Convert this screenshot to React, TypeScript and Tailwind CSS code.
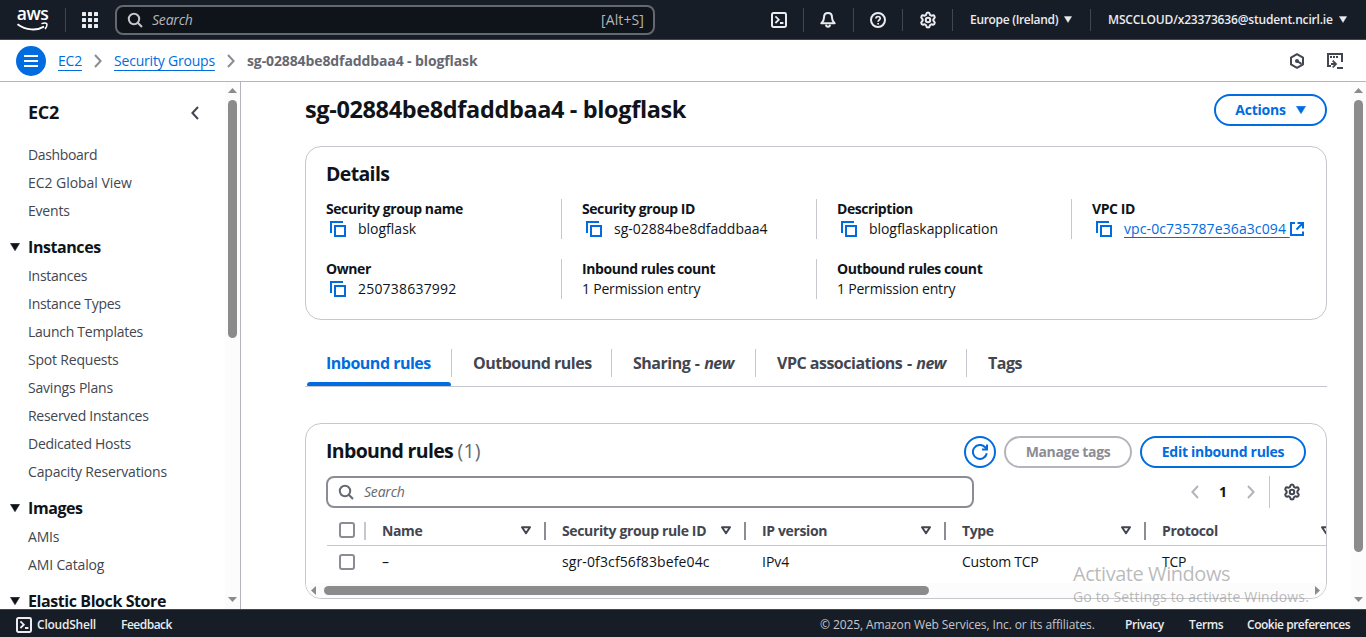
import type { ReactNode } from "react";
import { Settings } from "lucide-react";

const cx = (...c: (string | undefined | false)[]) => c.filter(Boolean).join(" ");

function Caret({ className }: { className?: string }) {
  return (
    <svg viewBox="0 0 10 8" className={cx("shrink-0", className)} fill="currentColor">
      <path d="M0.4 0.3h9.2L5 7.8z" stroke="currentColor" strokeWidth="0.5" strokeLinejoin="round" />
    </svg>
  );
}

function Chevron({ left, className }: { left?: boolean; className?: string }) {
  return (
    <svg viewBox="0 0 8 14" className={cx("h-[14px] w-2 shrink-0", className)} fill="none" stroke="currentColor" strokeWidth="2">
      <path d={left ? "M7 1L1.4 7L7 13" : "M1 1l5.6 6L1 13"} />
    </svg>
  );
}

function SearchIcon({ className }: { className?: string }) {
  return (
    <svg viewBox="0 0 16 16" className={cx("size-4 shrink-0", className)} fill="none" stroke="currentColor" strokeWidth="2">
      <circle cx="7" cy="7" r="5.2" />
      <path d="M10.8 10.8L15 15" />
    </svg>
  );
}

function ShellIcon() {
  return (
    <svg viewBox="0 0 16 16" className="size-4 shrink-0" fill="none" stroke="currentColor" strokeWidth="2">
      <rect x="1" y="1" width="14" height="14" rx="1.4" />
      <path d="M4.4 4.4L7.8 7.7L4.4 11M9 11h3.4" strokeWidth="1.8" />
    </svg>
  );
}

function CopyIcon() {
  return (
    <svg viewBox="0 0 16 16" className="size-4 shrink-0 text-[#006ce0]" fill="none" stroke="currentColor" strokeWidth="2">
      <path d="M1 12V1h12" />
      <rect x="5" y="5" width="10" height="10" />
    </svg>
  );
}

function FilterCaret({ className }: { className?: string }) {
  return (
    <svg viewBox="0 0 10 9" className={cx("h-[9px] w-[10px] shrink-0", className)} fill="none" stroke="#424650" strokeWidth="2" strokeLinejoin="round">
      <path d="M1 1.3h8L5 7.3z" />
    </svg>
  );
}

function ScrollTriangle({ dir }: { dir: "up" | "down" | "left" | "right" }) {
  const d = { up: "M0 5L4.5 0L9 5z", down: "M0 0h9L4.5 5z", left: "M5 0v9L0 4.5z", right: "M0 0v9L5 4.5z" }[dir];
  const vertical = dir === "up" || dir === "down";
  return (
    <svg viewBox={vertical ? "0 0 9 5" : "0 0 5 9"} className={vertical ? "h-[5px] w-[9px] shrink-0" : "h-[9px] w-[5px] shrink-0"}>
      <path d={d} fill="#8b8b8b" />
    </svg>
  );
}

function VScroll({ thumb }: { thumb: string }) {
  return (
    <div className="flex w-[15px] shrink-0 flex-col items-center bg-[#fcfcfc] pt-[6px] pb-[7px]">
      <ScrollTriangle dir="up" />
      <div className={cx("mt-[7px] w-[9px] rounded-full bg-[#8b8b8b]", thumb)} />
      <div className="flex-1" />
      <ScrollTriangle dir="down" />
    </div>
  );
}

function Sep({ short }: { short?: boolean }) {
  return <div className={cx("w-px shrink-0 bg-[#424650]", short ? "h-[22px]" : "h-6")} />;
}

function TopBar() {
  return (
    <header className="flex h-10 shrink-0 items-center border-b border-[#424650] bg-[#161d26] pr-[19px] pl-[17px] text-[#ebebf0]">
      <div className="flex w-[31px] flex-col items-center text-white">
        <span className="h-[15px] text-[17.5px] leading-[11px] font-semibold tracking-[-0.5px]">aws</span>
        <svg viewBox="0 0 31 9" className="mt-[-1px] h-[9px] w-[31px]" fill="none" stroke="currentColor">
          <path d="M0.5 2.2C9 8.6 20 8.8 27 4.6" strokeWidth="1.9" />
          <path d="M24.4 1.6c2.4-.7 4.6-.7 5.3 0 .5.9-.2 3.4-1.6 5.4" strokeWidth="1.5" />
        </svg>
      </div>
      <div className="ml-[17px]"><Sep /></div>
      <svg viewBox="0 0 16 16" className="ml-4 size-4 shrink-0" fill="currentColor">
        {[0, 6, 12].map((y) => [0, 6, 12].map((x) => <rect key={`${x}-${y}`} x={x} y={y} width="4" height="4" rx="0.6" />))}
      </svg>
      <div className="ml-[17px] flex h-[30px] w-[540px] items-center rounded-lg border-2 border-[#656871] bg-[#0f141a] pr-[9px] pl-[10px] text-sm text-[#b4b4bb]">
        <SearchIcon className="text-[#c6c6cd]" />
        <span className="ml-[9px] tracking-[-0.2px] italic">Search</span>
        <span className="ml-auto tracking-[0.1px]">[Alt+S]</span>
      </div>
      <div className="ml-[116px] flex items-center">
        <ShellIcon />
        <div className="ml-4"><Sep /></div>
        <svg viewBox="0 0 16 16" className="ml-4 size-4" fill="none" stroke="currentColor" strokeWidth="2" strokeLinejoin="round">
          <path d="M8 1C5.300 1 4 2.800 4 5.400C4 8.600 2.700 9.700 1.300 11.300h13.400C13.300 9.700 12 8.600 12 5.400C12 2.800 10.700 1 8 1z" />
          <path d="M6 12.600c.2 2.800 3.800 2.800 4 0" />
        </svg>
        <div className="ml-[17px]"><Sep /></div>
        <svg viewBox="0 0 16 16" className="ml-4 size-4" fill="none" stroke="currentColor" strokeWidth="2">
          <circle cx="8" cy="8" r="7" />
          <path d="M5.900 6.600C5.900 3.700 10.200 3.900 10.200 6.500C10.200 8 8.100 8 8.100 9.700M8.100 10.900v1.700" strokeWidth="1.700" />
        </svg>
        <div className="ml-4"><Sep short /></div>
        <Settings className="ml-4 size-[18px]" strokeWidth={2.7} />
        <div className="ml-[15px]"><Sep short /></div>
      </div>
      <div className="ml-[17px] flex items-center text-xs font-semibold">
        <span className="w-[88px] tracking-[-0.31px] whitespace-nowrap">Europe (Ireland)</span>
        <Caret className="ml-[6px] h-[7px] w-2" />
        <div className="ml-[18px]"><Sep short /></div>
        <span className="ml-[17px] w-[226px] tracking-[-0.17px] whitespace-nowrap">MSCCLOUD/x23373636@student.ncirl.ie</span>
        <Caret className="ml-[5px] h-[7px] w-2" />
      </div>
    </header>
  );
}

function Breadcrumbs() {
  return (
    <div className="flex h-[42px] shrink-0 items-center border-b border-[#b4b4bb] bg-white pr-[23px] pl-4 text-sm">
      <div className="flex size-[30px] items-center justify-center rounded-full bg-[#006ce0]">
        <svg viewBox="0 0 14 12" className="h-3 w-[14px]" stroke="white" strokeWidth="2">
          <path d="M0 1h14M0 6h14M0 11h14" />
        </svg>
      </div>
      <a className="ml-3 w-6 tracking-[-0.2px] text-[#006ce0] underline underline-offset-[4px]">EC2</a>
      <Chevron className="ml-3 text-[#8c8c94]" />
      <a className="ml-3 w-[101px] tracking-[-0.2px] whitespace-nowrap text-[#006ce0] underline underline-offset-[4px]">Security Groups</a>
      <Chevron className="ml-3 text-[#8c8c94]" />
      <span className="ml-[12px] font-bold tracking-[-0.11px] text-[#656871]">sg-02884be8dfaddbaa4 - blogflask</span>
      <svg viewBox="0 0 16 16" className="ml-auto size-4 text-[#424650]" fill="none" stroke="currentColor" strokeWidth="2">
        <path d="M8 1.200l6 3.400v6.800l-6 3.400-6-3.400V4.600z" strokeLinejoin="round" />
        <circle cx="8" cy="8" r="2" fill="currentColor" stroke="none" />
        <path d="M8 8l4.500 2.800" />
      </svg>
      <svg viewBox="0 0 16 16" className="ml-[22px] size-4 text-[#424650]" fill="none" stroke="currentColor" strokeWidth="2">
        <path d="M4 13H1V1h14v8" />
        <path d="M3 4h2M6 4h2M9 4h2M10 15h6" />
        <path d="M4 11h4.500M5.700 7.600L9 11l-3.300 3.500" strokeWidth="1.800" />
      </svg>
    </div>
  );
}

function NavItem({ children, className }: { children: ReactNode; className?: string }) {
  return <li className={cx("h-7 leading-7 whitespace-nowrap text-[#424650]", className ?? "tracking-[-0.2px]")}>{children}</li>;
}

function NavSection({ title, children, className }: { title: string; children?: ReactNode; className?: string }) {
  return (
    <section className={className}>
      <div className="-ml-[18px] flex h-[30px] items-center">
        <Caret className="h-2 w-[10px] text-[#0f141a]" />
        <span className="ml-2 text-base font-bold tracking-[-0.42px] whitespace-nowrap text-[#0f141a]">{title}</span>
      </div>
      <ul>{children}</ul>
    </section>
  );
}

function Sidebar() {
  return (
    <aside className="flex w-[241px] shrink-0 border-r border-[#b4b4bb]">
      <nav className="flex-1 overflow-hidden pl-7 text-sm">
        <div className="flex h-[59px] items-center pt-[2px]">
          <span className="text-[18px] font-bold tracking-[-0.3px] text-[#0f141a]">EC2</span>
          <Chevron left className="mr-[26px] ml-auto text-[#424650]" />
        </div>
        <ul>
          <NavItem className="tracking-[-0.35px]">Dashboard</NavItem>
          <NavItem className="tracking-[-0.04px]">EC2 Global View</NavItem>
          <NavItem>Events</NavItem>
        </ul>
        <NavSection title="Instances" className="mt-[7px]">
          <NavItem className="tracking-[-0.3px]">Instances</NavItem>
          <NavItem className="tracking-[-0.27px]">Instance Types</NavItem>
          <NavItem className="tracking-[-0.26px]">Launch Templates</NavItem>
          <NavItem>Spot Requests</NavItem>
          <NavItem>Savings Plans</NavItem>
          <NavItem className="tracking-[-0.28px]">Reserved Instances</NavItem>
          <NavItem className="tracking-[-0.26px]">Dedicated Hosts</NavItem>
          <NavItem className="tracking-[-0.17px]">Capacity Reservations</NavItem>
        </NavSection>
        <NavSection title="Images" className="mt-[7px]">
          <NavItem>AMIs</NavItem>
          <NavItem className="tracking-[-0.15px]">AMI Catalog</NavItem>
        </NavSection>
        <NavSection title="Elastic Block Store" className="mt-[7px]" />
      </nav>
      <VScroll thumb="h-[238px]" />
    </aside>
  );
}

function Button({ children, disabled, className }: { children: ReactNode; disabled?: boolean; className?: string }) {
  return (
    <button
      className={cx(
        "flex h-8 items-center justify-center rounded-full border-2 bg-white text-sm font-bold whitespace-nowrap",
        disabled ? "border-[#b4b4bb] text-[#8c8c94]" : "border-[#006ce0] text-[#006ce0]",
        className,
      )}
    >
      {children}
    </button>
  );
}

function Field({ label, copy, first, children, className }: { label: string; copy?: boolean; first?: boolean; children: ReactNode; className?: string }) {
  return (
    <div className={cx("h-10 text-sm leading-5 whitespace-nowrap text-[#0f141a]", !first && "border-l border-[#c6c6cd] pl-5")}>
      <div className="font-bold tracking-[-0.43px]">{label}</div>
      <div className={cx("flex items-center", className)}>
        {copy && <span className="mr-3 ml-1 flex"><CopyIcon /></span>}
        {children}
      </div>
    </div>
  );
}

function Details() {
  return (
    <section className="mt-5 h-[174px] rounded-2xl border border-[#c6c6cd] bg-white pt-[13px] pl-5">
      <h2 className="text-[19.5px] leading-7 font-bold tracking-[-0.65px] text-[#0f141a]">Details</h2>
      <div className="mt-[11px] grid grid-cols-[235px_255px_255px_255px] gap-y-5">
        <Field label="Security group name" copy first>blogflask</Field>
        <Field label="Security group ID" copy>sg-02884be8dfaddbaa4</Field>
        <Field label="Description" copy className="tracking-[-0.06px]">blogflaskapplication</Field>
        <Field label="VPC ID" copy>
          <a className="w-[166px] tracking-[0.1px] text-[#006ce0] underline underline-offset-[3px]">vpc-0c735787e36a3c094&nbsp;</a>
          <svg viewBox="0 0 14 14" className="size-[14px] text-[#006ce0]" fill="none" stroke="currentColor" strokeWidth="2">
            <path d="M5 1H1v12h12V9.500M7.500 1H13v5.500M12.500 1.500L6.500 7.500" />
          </svg>
        </Field>
        <Field label="Owner" copy first className="tracking-[0.2px]">250738637992</Field>
        <Field label="Inbound rules count" className="tracking-[-0.2px]">1 Permission entry</Field>
        <Field label="Outbound rules count" className="tracking-[-0.2px]">1 Permission entry</Field>
      </div>
    </section>
  );
}

function Tab({ width, last, children }: { width: string; last?: boolean; children: ReactNode }) {
  return (
    <div className={cx("h-7 pl-[21px] leading-7 whitespace-nowrap", !last && "border-r border-[#c6c6cd]", width)}>{children}</div>
  );
}

function NewTag() {
  return <><span className="px-px">-</span> <i>new</i></>;
}

function Tabs() {
  return (
    <div className="mt-[29px] flex h-[38px] border-b border-[#c6c6cd] text-base font-bold tracking-[-0.5px] text-[#424650]">
      <div className="flex w-[147px] flex-col">
        <div className="h-7 border-r border-[#c6c6cd] pl-[21px] leading-7 text-[#006ce0]">Inbound rules</div>
        <div className="mt-[5px] mr-px ml-[2px] h-1 rounded-t-[3px] rounded-b-[1px] bg-[#006ce0]" />
      </div>
      <Tab width="w-[160px]">Outbound rules</Tab>
      <Tab width="w-[144px]">Sharing <NewTag /></Tab>
      <Tab width="w-[211px]">VPC associations <NewTag /></Tab>
      <Tab width="w-[100px]" last>Tags</Tab>
    </div>
  );
}

function Checkbox() {
  return <span className="block size-4 shrink-0 rounded-[3px] border-2 border-[#8c8c94] bg-white" />;
}

function HeadCell({ children, width }: { children: ReactNode; width: string }) {
  return (
    <div className={cx("flex h-[18px] shrink-0 items-center border-r-2 border-[#8c8c94] pr-[13px] pl-4 whitespace-nowrap", width)}>
      {children}
      <FilterCaret className="ml-auto" />
    </div>
  );
}

function Rules() {
  return (
    <section className="mt-[36px] flex h-[176px] flex-col overflow-hidden rounded-2xl border border-[#c6c6cd] bg-white">
      <div className="mt-3 flex h-8 items-center px-5">
        <h2 className="pb-[2px] text-[19.5px] leading-7 font-bold tracking-[-0.65px] text-[#0f141a]">
          Inbound rules <span className="font-normal tracking-[0.2px] text-[#656871]">(1)</span>
        </h2>
        <Button className="ml-auto w-8">
          <svg viewBox="0 0 16 16" className="size-4 shrink-0" fill="none" stroke="currentColor" strokeWidth="2">
            <path d="M14.800 9.300A7 7 0 1 1 12.900 3L15 5.300" />
            <path d="M15 0.500v5h-5" />
          </svg>
        </Button>
        <Button disabled className="ml-2 w-32 tracking-[-0.35px]">Manage tags</Button>
        <Button className="ml-2 w-[166px] tracking-[-0.29px]">Edit inbound rules</Button>
      </div>
      <div className="mt-2 flex h-8 items-center pl-5">
        <div className="flex h-8 w-[648px] items-center rounded-lg border-2 border-[#8c8c94] pl-[10px] text-sm text-[#656871]">
          <SearchIcon />
          <span className="ml-[10px] tracking-[-0.2px] italic">Search</span>
        </div>
        <Chevron left className="ml-[217px] text-[#b4b4bb]" />
        <span className="ml-5 w-2 text-sm font-bold text-[#0f141a]">1</span>
        <Chevron className="ml-5 text-[#b4b4bb]" />
        <div className="ml-[14px] h-8 w-px bg-[#c6c6cd]" />
        <Settings className="ml-[13px] size-[18px] text-[#424650]" strokeWidth={2.7} />
      </div>
      <div className="ml-[21px] flex h-[38px] shrink-0 items-center border-b border-[#c6c6cd] pt-[8px] text-sm font-bold tracking-[-0.36px] text-[#424650]">
        <div className="flex h-[18px] w-[39px] shrink-0 items-center border-r-2 border-[#c6c6cd] pb-0.5 pl-3"><Checkbox /></div>
        <HeadCell width="w-[180px]">Name</HeadCell>
        <HeadCell width="w-[200px]">Security group rule ID</HeadCell>
        <HeadCell width="w-[200px]">IP version</HeadCell>
        <HeadCell width="w-[200px]">Type</HeadCell>
        <HeadCell width="w-[200px]">Protocol</HeadCell>
      </div>
      <div className="ml-[21px] flex h-[37px] shrink-0 items-center pb-[5px] text-sm whitespace-nowrap text-[#0f141a]">
        <div className="w-[39px] shrink-0 pl-3"><Checkbox /></div>
        <div className="w-[180px] shrink-0 pl-4">–</div>
        <div className="w-[200px] shrink-0 pl-4 tracking-[0.12px]">sgr-0f3cf56f83befe04c</div>
        <div className="w-[200px] shrink-0 pl-4">IPv4</div>
        <div className="w-[200px] shrink-0 pl-4 tracking-[-0.25px]">Custom TCP</div>
        <div className="w-[200px] shrink-0 pl-4 tracking-[-0.25px]">TCP</div>
      </div>
      <div className="flex h-[15px] shrink-0 items-center bg-[#fcfcfc] pr-[6px] pl-[5px]">
        <ScrollTriangle dir="left" />
        <div className="ml-2 h-[9px] w-[605px] rounded-full bg-[#8b8b8b]" />
        <div className="flex-1" />
        <ScrollTriangle dir="right" />
      </div>
    </section>
  );
}

function Footer() {
  return (
    <footer className="flex h-7 shrink-0 items-center border-t border-[#424650] bg-[#161d26] px-4 pt-[3px] text-xs font-semibold whitespace-nowrap text-[#ebebf0]">
      <ShellIcon />
      <span className="ml-[5px] w-[84px] tracking-[-0.23px]">CloudShell</span>
      <span className="tracking-[-0.5px]">Feedback</span>
      <span className="ml-auto w-[305px] font-medium tracking-[-0.1px] text-[#c6c6cd]">© 2025, Amazon Web Services, Inc. or its affiliates.</span>
      <span className="w-16 tracking-[-0.4px]">Privacy</span>
      <span className="w-[58px] tracking-[-0.4px]">Terms</span>
      <span className="w-[103px] tracking-[-0.48px]">Cookie preferences</span>
    </footer>
  );
}

export default function App() {
  return (
    <div className="relative flex h-[637px] w-[1366px] flex-col overflow-hidden bg-white font-['Open_Sans',sans-serif]">
      <TopBar />
      <Breadcrumbs />
      <div className="flex min-h-0 flex-1">
        <Sidebar />
        <main className="min-w-0 flex-1 overflow-hidden pt-3 pr-6 pl-16">
          <div className="flex h-8 items-center justify-between">
            <h1 className="pb-[2px] text-[23.5px] leading-[30px] font-bold tracking-[-0.37px] text-[#0f141a]">sg-02884be8dfaddbaa4 - blogflask</h1>
            <Button className="w-[113px] tracking-[-0.2px]">
              Actions
              <Caret className="ml-[10px] h-2 w-[10px]" />
            </Button>
          </div>
          <Details />
          <Tabs />
          <Rules />
        </main>
        <VScroll thumb="h-[452px]" />
      </div>
      <Footer />
      <div className="pointer-events-none absolute top-[562px] left-[1073px] whitespace-nowrap text-[#8c8c8c]/60">
        <div className="text-xl leading-6 tracking-[-0.44px]">Activate Windows</div>
        <div className="text-sm leading-[22px] tracking-[0.19px]">Go to Settings to activate Windows.</div>
      </div>
    </div>
  );
}
